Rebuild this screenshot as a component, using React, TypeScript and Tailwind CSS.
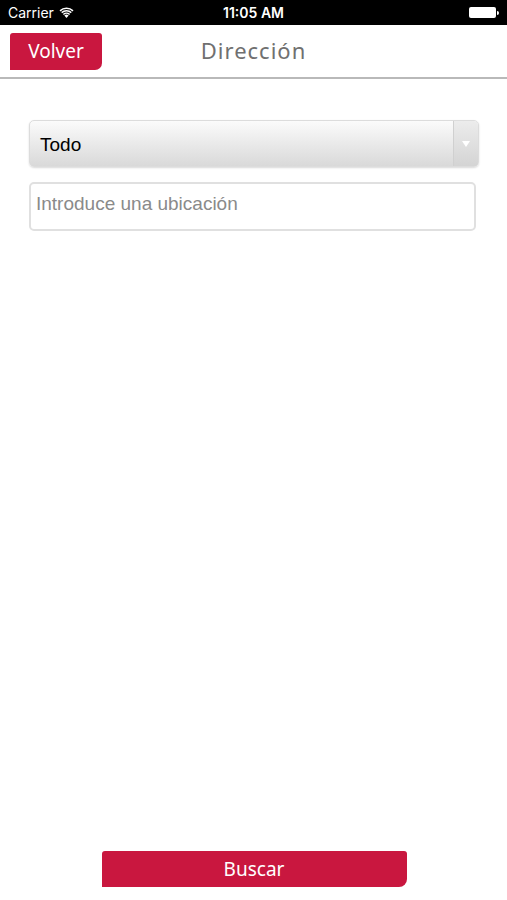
import React from 'react';

function StatusBar() {
  return (
    <div className="relative flex h-[25px] items-center bg-black px-[8px] text-white" style={{ fontFamily: 'Inter, "Liberation Sans", sans-serif' }}>
      <div className="flex items-center gap-[5px] text-[14px]">
        <span>Carrier</span>
        <svg width="15" height="11" viewBox="0 0 15 11" fill="white">
          <path d="M7.5 11 L5.4 8.6 A3 3 0 0 1 9.6 8.6 Z" />
          <path d="M3.9 6.9 A5.2 5.2 0 0 1 11.1 6.9 L10.1 8 A3.8 3.8 0 0 0 4.9 8 Z" />
          <path d="M2.2 5.1 A7.6 7.6 0 0 1 12.8 5.1 L11.8 6.2 A6.2 6.2 0 0 0 3.2 6.2 Z" />
          <path d="M0.5 3.3 A10 10 0 0 1 14.5 3.3 L13.5 4.4 A8.6 8.6 0 0 0 1.5 4.4 Z" />
        </svg>
      </div>
      <div className="absolute left-1/2 -translate-x-1/2 text-[14px] font-semibold">11:05 AM</div>
      <div className="ml-auto flex items-center">
        <div className="h-[11px] w-[27px] rounded-[2px] bg-white" />
        <div className="ml-[1px] h-[4px] w-[2px] rounded-r-sm bg-white" />
      </div>
    </div>
  );
}

export default function App() {
  return (
    <div className="flex min-h-[900px] w-[507px] flex-col bg-white">
      <StatusBar />

      {/* Nav bar */}
      <div className="relative flex h-[54px] items-center border-b-2 border-[#b9b9b9] px-[10px]">
        <button
          className="flex h-[37px] w-[92px] items-center justify-center rounded-tl-[3px] rounded-tr-[3px] rounded-br-[7px] bg-[#c9173f] text-[19px] text-white"
          style={{ fontFamily: '"Noto Sans", sans-serif' }}
        >
          Volver
        </button>
        <div
          className="absolute left-1/2 top-[9px] -translate-x-1/2 text-[22px] tracking-[1px] text-[#707070]"
          style={{ fontFamily: '"Noto Sans", sans-serif' }}
        >
          Dirección
        </div>
      </div>

      {/* Form */}
      <div className="flex flex-col gap-[15px] px-[29px] pt-[41px]" style={{ fontFamily: '"Liberation Sans", Arial, sans-serif' }}>
        <div className="flex h-[47px] w-[450px] items-stretch overflow-hidden rounded-[5px] border border-[#dcdcdc] bg-gradient-to-b from-[#fbfbfb] to-[#d9d9d9] shadow-[0_1px_2px_rgba(0,0,0,0.15)]">
          <div className="flex flex-1 items-center pl-[10px] pt-[3px] text-[19px] text-black">Todo</div>
          <div className="flex w-[25px] items-center justify-center border-l border-[#d0d0d0] bg-gradient-to-b from-[#ececec] to-[#d4d4d4]">
            <svg width="8" height="6" viewBox="0 0 8 6">
              <path d="M0 0 H8 L4 6 Z" fill="white" />
            </svg>
          </div>
        </div>
        <div className="flex h-[49px] w-[447px] items-center rounded-[5px] border-2 border-[#e0e0e0] pb-[4px] pl-[5px] text-[19px] text-[#8a8a8a]">
          Introduce una ubicación
        </div>
      </div>

      <div className="flex-1" />

      <div className="flex justify-center pb-[13px]">
        <button
          className="ml-[1px] flex h-[36px] w-[305px] items-center justify-center rounded-tl-[3px] rounded-tr-[3px] rounded-br-[8px] bg-[#c9173f] text-[19px] text-white"
          style={{ fontFamily: '"Noto Sans", sans-serif' }}
        >
          Buscar
        </button>
      </div>
    </div>
  );
}
